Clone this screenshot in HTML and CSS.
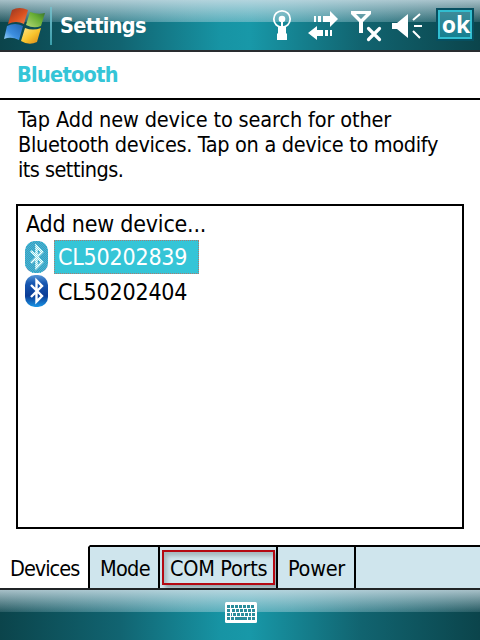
FILE: index.html
```
<!DOCTYPE html>
<html lang="en">
<head>
<meta charset="utf-8">
<title>Settings</title>
<link rel="stylesheet" href="styles.css">
</head>
<body>
<div class="screen">
  <header class="topbar">
    <svg class="flag" width="42" height="42" viewBox="0 0 42 42">
      <defs>
        <linearGradient id="red" x1="0" y1="0" x2="1" y2="1"><stop offset="0" stop-color="#8e3524"/><stop offset=".55" stop-color="#d9501f"/><stop offset="1" stop-color="#f0804a"/></linearGradient>
        <linearGradient id="green" x1="0" y1="1" x2="1" y2="0"><stop offset="0" stop-color="#b5d977"/><stop offset=".6" stop-color="#68ae35"/><stop offset="1" stop-color="#35702c"/></linearGradient>
        <linearGradient id="blue" x1="1" y1="0" x2="0" y2="1"><stop offset="0" stop-color="#2264b0"/><stop offset=".6" stop-color="#3d8fe0"/><stop offset="1" stop-color="#9bd5fa"/></linearGradient>
        <linearGradient id="gold" x1="0" y1="0" x2="1" y2="1"><stop offset="0" stop-color="#fbe58a"/><stop offset=".5" stop-color="#f8c52e"/><stop offset="1" stop-color="#d98317"/></linearGradient>
      </defs>
      <path d="M9 5Q16 1 25 5L21 19Q13 15 5 19Z" fill="url(#red)"/>
      <path d="M27 7Q35 10 42 8L38 21Q31 24 23 20Z" fill="url(#green)"/>
      <path d="M4 21Q12 17 20 21L16 35Q8 31 1 34Z" fill="url(#blue)"/>
      <path d="M22 23Q30 26 38 23L34 37Q26 41 18 36Z" fill="url(#gold)"/>
    </svg>
    <span class="divider"></span>
    <h1 class="title">Settings</h1>
    <svg class="status" width="170" height="50" viewBox="266 0 170 50" fill="#fff">
      <circle cx="282" cy="19" r="8.200" fill="none" stroke="#fff" stroke-width="1.800"/>
      <circle cx="282" cy="19" r="3.300"/>
      <path d="M281 21h2v6h3v6l1 1v6h-10v-6l1-1v-6h3z"/>
      <path d="M314 16h2v6h-2zM318 16h3v6h-3zM323 16h7v-5l8 8-8 8v-5h-7zM332 30h-2v6h2zM328 30h-3v6h3zM323 30h-6v-4l-9 7 9 7v-4h6z"/>
      <path fill-rule="evenodd" d="M351 11h20v3l-8 8v11h-4V22l-8-8zM356 14l5 5 5-5z"/>
      <path d="M368.500 28.500L379.500 39.500M379.500 28.500L368.500 39.500" stroke="#fff" stroke-width="3.200" stroke-linecap="round"/>
      <path d="M392 23h5l11-9v24l-11-9h-5z"/>
      <path d="M413 20l7-6M414 26h8M413 31l7 7" fill="none" stroke="#fff" stroke-width="2"/>
    </svg>
    <button class="ok">ok</button>
  </header>
  <h2 class="heading">Bluetooth</h2>
  <p class="intro"><span class="l1">Tap Add new device to search for other</span><br><span class="l2">Bluetooth devices. Tap on a device to modify</span><br><span class="l3">its settings.</span></p>
  <div class="list">
    <div class="add">Add new device...</div>
    <div class="device">
      <svg class="bt" width="24" height="32" viewBox="0 0 24 32">
        <defs>
          <pattern id="dots" width="2" height="2" patternUnits="userSpaceOnUse"><path d="M0 0h1v1H0zM1 1h1v1H1z" fill="#35c5d7"/></pattern>
          <linearGradient id="btfill" x1="0" y1="0" x2="0" y2="1"><stop offset="0" stop-color="#5596d7"/><stop offset=".25" stop-color="#1758b2"/><stop offset=".65" stop-color="#0b3c96"/><stop offset="1" stop-color="#1995e5"/></linearGradient>
          <g id="btshape"><rect width="23" height="32" rx="10" fill="url(#btfill)"/></g>
          <path id="rune" d="M6 10l11 11-5.500 5.500V5.500L17 11 6 22" fill="none" stroke="#fff" stroke-width="2.400"/>
        </defs>
        <rect width="23" height="32" rx="10" fill="#4a8fbd"/>
        <use href="#rune"/>
        <rect width="23" height="32" rx="10" fill="url(#dots)" shape-rendering="crispEdges"/>
        <use href="#rune" opacity=".45"/>
      </svg>
      <span class="name selected"><span>CL50202839</span></span>
    </div>
    <div class="device">
      <svg class="bt" width="24" height="32" viewBox="0 0 24 32"><use href="#btshape"/><use href="#rune"/></svg>
      <span class="name second"><span>CL50202404</span></span>
    </div>
  </div>
  <nav class="tabs">
    <div class="tab active"><span>Devices</span></div>
    <div class="tab mode"><span>Mode</span></div>
    <div class="tab com"><span class="mark"><span>COM Ports</span></span></div>
    <div class="tab power"><span>Power</span></div>
    <div class="rest"></div>
  </nav>
  <footer class="bottombar">
    <svg width="32" height="21" viewBox="0 0 32 21">
      <rect width="32" height="21" rx="1.500" fill="#fff"/>
      <g fill="none" stroke="#2a8d9b" stroke-width="3">
        <path d="M2 4.500h28" stroke-dasharray="3 1"/>
        <path d="M2 8.500h4M7 8.500h23" stroke-dasharray="3 1"/>
        <path d="M2 12.500h5M8 12.500h18M27 12.500h3" stroke-dasharray="3 1"/>
        <path d="M2 16.500h3M6 16.500h3M10 16.500h12M23 16.500h3M27 16.500h3"/>
      </g>
    </svg>
  </footer>
</div>
</body>
</html>
```

FILE: styles.css
```
* { box-sizing: border-box; }

body {
  margin: 0;
  background: #fff;
}

.screen {
  width: 480px;
  height: 640px;
  display: flex;
  flex-direction: column;
  overflow: hidden;
  background: #fff;
  color: #000;
  font-family: "DejaVu Sans Condensed", "DejaVu Sans", sans-serif;
  font-stretch: condensed;
  font-size: 21.5px;
}

.topbar,
.bottombar {
  background:
    linear-gradient(rgba(205, 222, 230, .8), rgba(160, 190, 200, .18)) 0 0 / 100% 22px no-repeat,
    linear-gradient(90deg, transparent, rgba(150, 210, 220, .4) 40%, rgba(150, 210, 220, .4) 60%, transparent) 0 0 / 100% 22px no-repeat,
    linear-gradient(90deg, #0b444b, #116471 25%, #1794a4 46%, #1898a8 52%, #116470 75%, #0b444b);
}

.topbar {
  flex: 0 0 52px;
  display: flex;
  align-items: flex-start;
  border-bottom: 2px solid #292d30;
}

.flag { margin: 5px 0 0 3px; flex: none; }

.divider {
  width: 2px;
  height: 38px;
  margin: 7px 0 0 5px;
  background: linear-gradient(#77bdc9, #3a9eab);
}

.title {
  margin: 11px 0 0 8px;
  width: 206px;
  font-size: 21.5px;
  line-height: 30px;
  letter-spacing: -.7px;
  color: #fff;
}

.status { flex: none; }

.ok {
  margin: 8px 0 0;
  width: 38px;
  height: 33px;
  padding: 0 0 0 2px;
  border: 2px solid #064f60;
  box-shadow: inset 0 0 0 2px #32bed0;
  background: linear-gradient(#408b99, #137f90);
  color: #fff;
  font: bold 23px/29px "Noto Sans", sans-serif;
}

.heading {
  flex: 0 0 48px;
  margin: 0;
  padding-left: 17px;
  border-bottom: 2px solid #000;
  color: #35c5d7;
  font-size: 21.5px;
  line-height: 46px;
  letter-spacing: -.7px;
}

.intro {
  flex: 0 0 104px;
  margin: 0;
  padding: 7px 0 0 18px;
  line-height: 25px;
  white-space: nowrap;
}

.l1 { letter-spacing: -.13px; }
.l2 { letter-spacing: -.32px; }
.l3 { letter-spacing: -.55px; }

.list {
  flex: 0 0 325px;
  margin: 0 16px;
  border: 2px solid #000;
  padding: 2px 0 0 7px;
}

.add {
  height: 32px;
  padding-left: 1px;
  line-height: 32px;
  font-size: 23px;
  letter-spacing: -.2px;
}

.device {
  height: 34px;
  display: flex;
  align-items: center;
}

.name {
  width: 145px;
  height: 34px;
  margin-left: 5px;
  padding-left: 4px;
  line-height: 35px;
  font-size: 23px;
  letter-spacing: -.2px;
  white-space: nowrap;
}

.second { line-height: 36px; }

.selected {
  color: #fff;
  background: #35c5d7;
  outline: 1px dotted #a77b72;
  outline-offset: -1px;
}

.tabs {
  flex: 0 0 45px;
  margin-top: 16px;
  display: flex;
  border-bottom: 2px solid #202426;
}

.tab,
.rest {
  height: 43px;
  border-top: 2px solid #000;
  background: #cfe5ed;
  line-height: 43px;
  white-space: nowrap;
}

.tab {
  border-right: 2px solid #000;
  padding-left: 10px;
}

.active {
  width: 90px;
  border-top-color: #fff;
  background: #fff;
  letter-spacing: -1px;
}

.mode { width: 70px; letter-spacing: -.7px; }
.com { width: 118px; padding: 3px 0 0 2px; letter-spacing: -.3px; }
.power { width: 78px; letter-spacing: -.3px; }
.rest { flex: 1; }

.mark {
  display: block;
  width: 113px;
  height: 35px;
  padding-left: 6px;
  border: 2px solid #b40812;
  box-shadow: 3px 3px 4px rgba(0, 0, 0, .3), inset 3px 4px 4px rgba(0, 0, 0, .2);
  line-height: 33px;
}

.bottombar {
  flex: 1;
  display: flex;
  justify-content: center;
  padding: 12px 0 0 2px;
}
```
